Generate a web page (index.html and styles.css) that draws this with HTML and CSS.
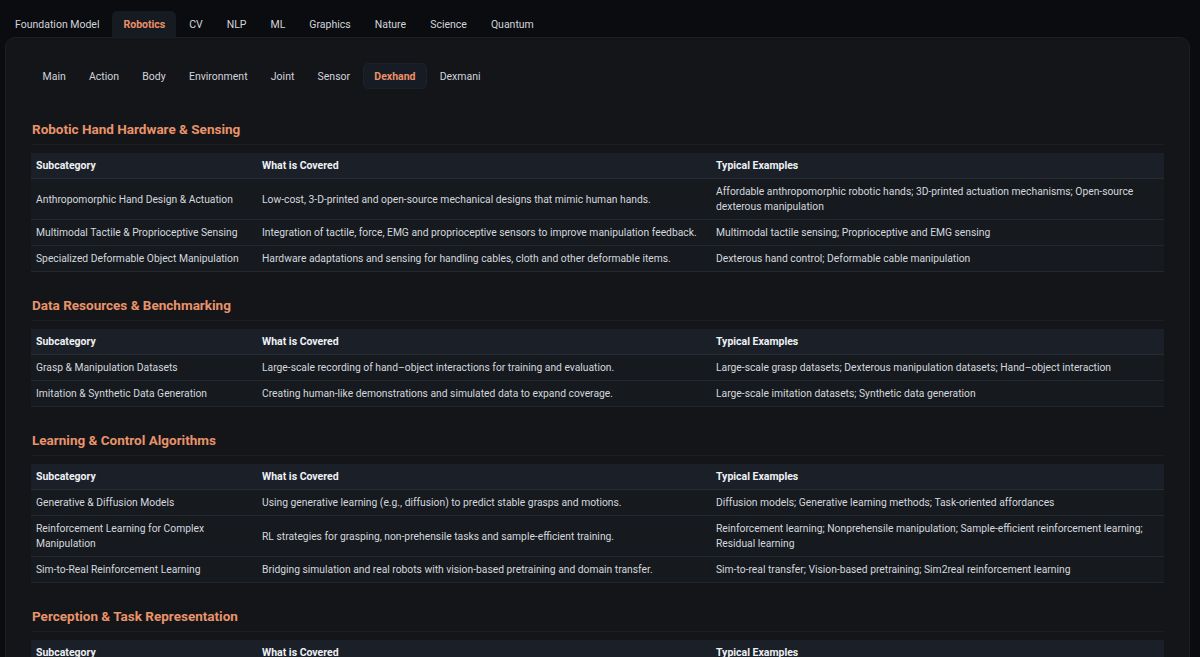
FILE: index.html
```html
<!DOCTYPE html>
<html>
<head>
<meta charset="utf-8">
<link rel="stylesheet" href="styles.css">
</head>
<body>
<nav class="tabs">
  <span class="tab">Foundation Model</span>
  <span class="tab active">Robotics</span>
  <span class="tab">CV</span>
  <span class="tab">NLP</span>
  <span class="tab">ML</span>
  <span class="tab">Graphics</span>
  <span class="tab">Nature</span>
  <span class="tab">Science</span>
  <span class="tab">Quantum</span>
</nav>
<main class="panel">
  <nav class="tabs sub">
    <span class="tab">Main</span>
    <span class="tab">Action</span>
    <span class="tab">Body</span>
    <span class="tab">Environment</span>
    <span class="tab">Joint</span>
    <span class="tab">Sensor</span>
    <span class="tab active">Dexhand</span>
    <span class="tab">Dexmani</span>
  </nav>

  <section class="section">
    <h2>Robotic Hand Hardware &amp; Sensing</h2>
    <table>
      <colgroup><col class="c1"><col class="c2"><col class="c3"></colgroup>
      <thead><tr><th>Subcategory</th><th>What is Covered</th><th>Typical Examples</th></tr></thead>
      <tbody>
        <tr><td>Anthropomorphic Hand Design &amp; Actuation</td><td>Low-cost, 3-D-printed and open-source mechanical designs that mimic human hands.</td><td>Affordable anthropomorphic robotic hands; 3D-printed actuation mechanisms; Open-source dexterous manipulation</td></tr>
        <tr><td>Multimodal Tactile &amp; Proprioceptive Sensing</td><td>Integration of tactile, force, EMG and proprioceptive sensors to improve manipulation feedback.</td><td>Multimodal tactile sensing; Proprioceptive and EMG sensing</td></tr>
        <tr><td>Specialized Deformable Object Manipulation</td><td>Hardware adaptations and sensing for handling cables, cloth and other deformable items.</td><td>Dexterous hand control; Deformable cable manipulation</td></tr>
      </tbody>
    </table>
  </section>

  <section class="section">
    <h2>Data Resources &amp; Benchmarking</h2>
    <table>
      <colgroup><col class="c1"><col class="c2"><col class="c3"></colgroup>
      <thead><tr><th>Subcategory</th><th>What is Covered</th><th>Typical Examples</th></tr></thead>
      <tbody>
        <tr><td>Grasp &amp; Manipulation Datasets</td><td>Large-scale recording of hand–object interactions for training and evaluation.</td><td>Large-scale grasp datasets; Dexterous manipulation datasets; Hand–object interaction</td></tr>
        <tr><td>Imitation &amp; Synthetic Data Generation</td><td>Creating human-like demonstrations and simulated data to expand coverage.</td><td>Large-scale imitation datasets; Synthetic data generation</td></tr>
      </tbody>
    </table>
  </section>

  <section class="section">
    <h2>Learning &amp; Control Algorithms</h2>
    <table>
      <colgroup><col class="c1"><col class="c2"><col class="c3"></colgroup>
      <thead><tr><th>Subcategory</th><th>What is Covered</th><th>Typical Examples</th></tr></thead>
      <tbody>
        <tr><td>Generative &amp; Diffusion Models</td><td>Using generative learning (e.g., diffusion) to predict stable grasps and motions.</td><td>Diffusion models; Generative learning methods; Task-oriented affordances</td></tr>
        <tr><td>Reinforcement Learning for Complex Manipulation</td><td>RL strategies for grasping, non-prehensile tasks and sample-efficient training.</td><td>Reinforcement learning; Nonprehensile manipulation; Sample-efficient reinforcement learning; Residual learning</td></tr>
        <tr><td>Sim-to-Real Reinforcement Learning</td><td>Bridging simulation and real robots with vision-based pretraining and domain transfer.</td><td>Sim-to-real transfer; Vision-based pretraining; Sim2real reinforcement learning</td></tr>
      </tbody>
    </table>
  </section>

  <section class="section">
    <h2>Perception &amp; Task Representation</h2>
    <table>
      <colgroup><col class="c1"><col class="c2"><col class="c3"></colgroup>
      <thead><tr><th>Subcategory</th><th>What is Covered</th><th>Typical Examples</th></tr></thead>
    </table>
  </section>
</main>
</body>
</html>
```

FILE: styles.css
```css
* { box-sizing: border-box; }
html, body { margin: 0; padding: 0; }
body {
  background: #0b0c10;
  color: #d4d8de;
  font-family: "Roboto", "Liberation Sans", sans-serif;
  font-size: 11px;
  height: 657px;
  overflow: hidden;
}
.tabs {
  display: flex;
  gap: 2px;
  padding: 11px 4px 0;
}
.tab {
  display: block;
  padding: 1px 11px 0;
  height: 26px;
  line-height: 25px;
  font-size: 10.5px;
  color: #d0d4da;
  border-radius: 5px 5px 0 0;
}
.tab.active {
  background: #161b22;
  color: #ec9068;
  font-weight: 700;
}
.tabs.sub {
  padding: 0 0 0 1px;
  margin-bottom: 31px;
}
.tabs.sub .tab {
  border-radius: 5px;
  padding: 1px 10.6px 0;
}
.tabs.sub .tab.active {
  background: #171c24;
  border: 1px solid #1c222a;
  padding-top: 0;
  line-height: 25px;
}
.panel {
  margin: 0 10px 0 5px;
  background: #131519;
  border: 1px solid #1b1e23;
  border-radius: 10px;
  padding: 25px 25px 40px 25px;
}
.section { margin-bottom: 24px; }
.section h2 {
  margin: 0 0 8px;
  font-size: 13.5px;
  line-height: 18px;
  font-weight: 700;
  color: #e9936a;
  padding: 0 0 6px 1px;
  border-bottom: 1px solid #1a1d23;
}
table {
  width: 100%;
  border-collapse: collapse;
  table-layout: fixed;
}
col.c1 { width: 226px; }
col.c2 { width: 454px; }
col.c3 { width: auto; }
th, td {
  text-align: left;
  vertical-align: middle;
  padding: 5px 5px;
  line-height: 15px;
  font-size: 10.3px;
}
th {
  background: #1b2028;
  color: #eef1f4;
  font-weight: 700;
  font-size: 10.5px;
  border-bottom: 1px solid #262c34;
}
td {
  background: #161a1f;
  color: #d4d8de;
  border-bottom: 1px solid #23272e;
}
```
